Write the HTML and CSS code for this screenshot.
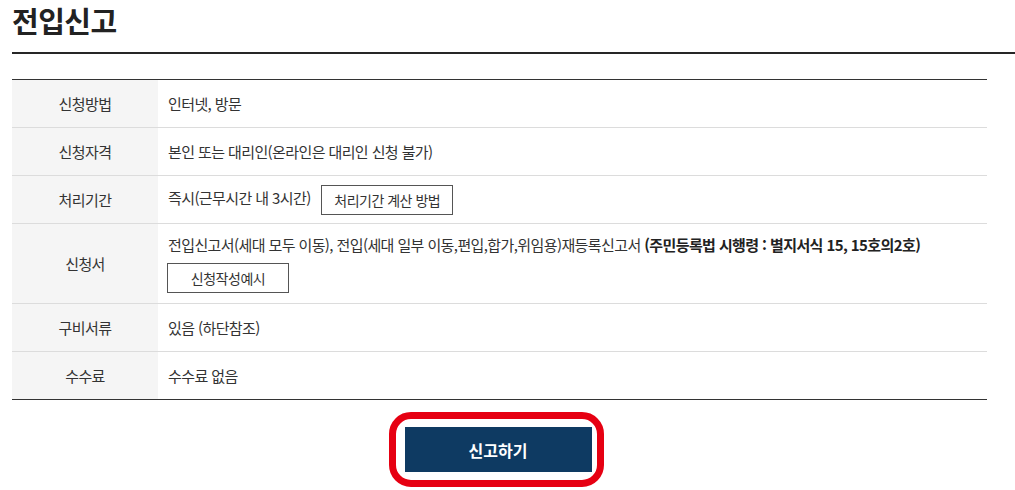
FILE: index.html
```html
<!DOCTYPE html>
<html lang="ko">

<head>
  <meta charset="UTF-8" />
  <title>전입신고</title>
  <link rel="stylesheet" href="styles.css">
</head>

<body>
  <div class="page">
    <h2 class="page-title">전입신고</h2>

    <table class="info-table">
      <tbody>
        <tr>
          <th>신청방법</th>
          <td>인터넷, 방문</td>
        </tr>
        <tr>
          <th>신청자격</th>
          <td>본인 또는 대리인(온라인은 대리인 신청 불가)</td>
        </tr>
        <tr>
          <th>처리기간</th>
          <td>즉시(근무시간 내 3시간) <button class="line-btn">처리기간 계산 방법</button></td>
        </tr>
        <tr class="tall">
          <th>신청서</th>
          <td>
            <p>전입신고서(세대 모두 이동), 전입(세대 일부 이동,편입,합가,위임용)재등록신고서 <b>(주민등록법 시행령 : 별지서식 15, 15호의2호)</b></p>
            <button class="line-btn wide">신청작성예시</button>
          </td>
        </tr>
        <tr>
          <th>구비서류</th>
          <td>있음 (하단참조)</td>
        </tr>
        <tr>
          <th>수수료</th>
          <td>수수료 없음</td>
        </tr>
      </tbody>
    </table>

    <div class="actions">
      <span class="highlight">
        <button class="submit-btn">신고하기</button>
      </span>
    </div>
  </div>
</body>

</html>
```

FILE: styles.css
```css
* {
  margin: 0;
  padding: 0;
  box-sizing: border-box;
}

body {
  font-family: "Noto Sans CJK KR", "Noto Sans", sans-serif;
  background-color: #ffffff;
  color: #333;
  overflow: hidden;
}

.page {
  padding-left: 12px;
}

.page-title {
  font-size: 29px;
  line-height: 40px;
  font-weight: bold;
  color: #222;
  letter-spacing: -0.5px;
  padding-bottom: 12px;
  border-bottom: 2px solid #262626;
  width: 1010px;
}

.info-table {
  width: 975px;
  margin-top: 25px;
  border-collapse: collapse;
  border-top: 1px solid #333;
  border-bottom: 1px solid #333;
  font-size: 15px;
}

.info-table th,
.info-table td {
  height: 48px;
  border-bottom: 1px solid #dcdcdc;
  vertical-align: middle;
  letter-spacing: -0.6px;
}

.info-table tr:last-child th,
.info-table tr:last-child td {
  border-bottom: none;
}

.info-table th {
  width: 146px;
  background-color: #f5f5f5;
  font-weight: normal;
  text-align: center;
  color: #333;
}

.info-table td {
  padding: 0 10px;
  text-align: left;
}

.info-table tr.tall td {
  height: 80px;
  padding: 8px 10px 9px;
}

.info-table b {
  font-weight: bold;
  color: #222;
}

.line-btn {
  height: 30px;
  padding: 0 12px;
  margin-left: 7px;
  border: 1px solid #555;
  background-color: #fff;
  font-family: inherit;
  font-size: 14px;
  color: #333;
  letter-spacing: -0.5px;
  vertical-align: middle;
}

.line-btn.wide {
  width: 122px;
  margin: 8px 0 0 -1px;
}

.actions {
  width: 975px;
  display: flex;
  justify-content: center;
  margin-top: 12px;
}

.highlight {
  display: inline-block;
  padding: 8px 5px 8px 9px;
  border: 7px solid #e60012;
  border-radius: 22px;
  margin-left: -7px;
}

.submit-btn {
  display: block;
  width: 187px;
  height: 45px;
  border: none;
  background-color: #0e3a62;
  color: #fff;
  font-family: inherit;
  font-size: 16px;
  font-weight: bold;
}
```
